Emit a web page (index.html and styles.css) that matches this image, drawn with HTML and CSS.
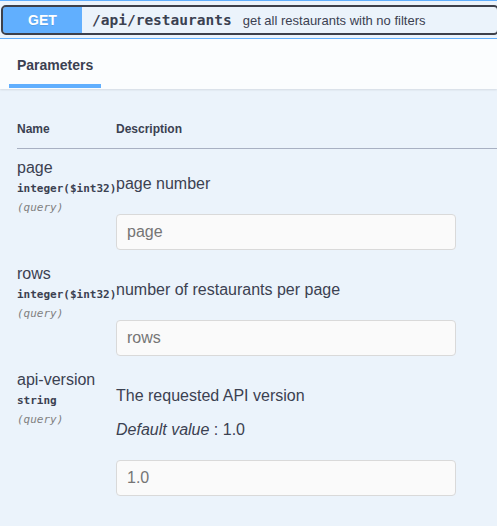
FILE: index.html
```html
<!DOCTYPE html>
<html lang="en">
<head>
<meta charset="utf-8">
<title>GET /api/restaurants</title>
<link rel="stylesheet" href="styles.css">
</head>
<body>
<div class="opblock">
  <div class="summary">
    <div class="control">
      <span class="method">GET</span>
      <span class="path">/api/restaurants</span>
      <span class="summary-desc">get all restaurants with no filters</span>
    </div>
  </div>
  <div class="section-header">
    <div class="tab">Parameters</div>
  </div>
  <div class="params">
    <div class="row head">
      <div class="col-name">Name</div>
      <div class="col-desc">Description</div>
    </div>
    <div class="row">
      <div class="name-cell">
        <div class="pname">page</div>
        <div class="ptype">integer($int32)</div>
        <div class="pin">(query)</div>
      </div>
      <div class="desc-cell">
        <p>page number</p>
        <div class="field-wrap"><input class="field" type="text" placeholder="page"></div>
      </div>
    </div>
    <div class="row">
      <div class="name-cell">
        <div class="pname">rows</div>
        <div class="ptype">integer($int32)</div>
        <div class="pin">(query)</div>
      </div>
      <div class="desc-cell">
        <p>number of restaurants per page</p>
        <div class="field-wrap"><input class="field" type="text" placeholder="rows"></div>
      </div>
    </div>
    <div class="row">
      <div class="name-cell">
        <div class="pname">api-version</div>
        <div class="ptype">string</div>
        <div class="pin">(query)</div>
      </div>
      <div class="desc-cell">
        <p>The requested API version</p>
        <p><i>Default value</i> : 1.0</p>
        <div class="field-wrap"><input class="field" type="text" placeholder="1.0"></div>
      </div>
    </div>
  </div>
</div>
</body>
</html>
```
FILE: styles.css
```css
html, body {
  margin: 0;
  padding: 0;
  background: #ebf3fb;
}
body {
  font-family: "Liberation Sans", Arial, sans-serif;
  color: #3b4151;
  overflow: hidden;
}
.opblock {
  border-top: 1px solid #61affe;
  background: #ebf3fb;
  min-height: 100vh;
}
.summary {
  display: flex;
  padding: 6px 0 5px 3px;
  border-bottom: 1px solid #61affe;
}
.control {
  flex: 1;
  display: flex;
  align-items: center;
  height: 26px;
  outline: 2px solid #3d404a;
  border-radius: 3px;
}
.method {
  width: 79px;
  height: 26px;
  display: flex;
  align-items: center;
  justify-content: center;
  background: #61affe;
  color: #fff;
  font-weight: 700;
  font-size: 14px;
  border-radius: 3px 0 0 3px;
  text-shadow: 0 1px 0 rgba(0,0,0,.1);
}
.path {
  margin-left: 10px;
  font-family: "DejaVu Sans Mono", monospace;
  font-weight: 700;
  font-size: 14.5px;
  color: #3b4151;
}
.summary-desc {
  margin-left: 11px;
  font-size: 13px;
  color: #3b4151;
}
.section-header {
  display: flex;
  height: 50px;
  box-sizing: border-box;
  padding: 0 0 1px 9px;
  background: rgba(255,255,255,.8);
  box-shadow: 0 1px 2px rgba(0,0,0,.1);
}
.tab {
  display: flex;
  align-items: center;
  padding: 7px 8px 0 8px;
  font-size: 14px;
  font-weight: 700;
  border-bottom: 4px solid #61affe;
}
.params {
  padding: 21px 0 0 17px;
}
.row {
  display: grid;
  grid-template-columns: 99px 1fr;
}
.row.head {
  font-size: 12px;
  font-weight: 700;
  line-height: 14px;
  padding: 12px 0;
  border-bottom: 1px solid #a8b0c2;
}
.name-cell {
  padding: 10px 0;
  white-space: nowrap;
}
.pname {
  font-size: 16px;
  line-height: 18px;
}
.ptype {
  font-family: "DejaVu Sans Mono", monospace;
  font-weight: 700;
  font-size: 11px;
  line-height: 14px;
  padding: 5px 0;
}
.pin {
  font-family: "DejaVu Sans Mono", monospace;
  font-style: italic;
  font-size: 11px;
  line-height: 14px;
  color: #808080;
}
.desc-cell {
  padding-top: 10px;
}
.desc-cell p {
  margin: 16px 0;
  font-size: 16px;
  line-height: 18px;
}
.field-wrap {
  padding: 5px 0;
}
.field {
  display: block;
  box-sizing: border-box;
  width: 340px;
  height: 36px;
  margin: 0;
  padding: 8px 10px;
  border: 1px solid #d9d9d9;
  border-radius: 4px;
  background: #fafafa;
  font-family: "Liberation Sans", Arial, sans-serif;
  font-size: 16px;
  color: #3b4151;
}
.field::placeholder {
  color: #757575;
}
```
